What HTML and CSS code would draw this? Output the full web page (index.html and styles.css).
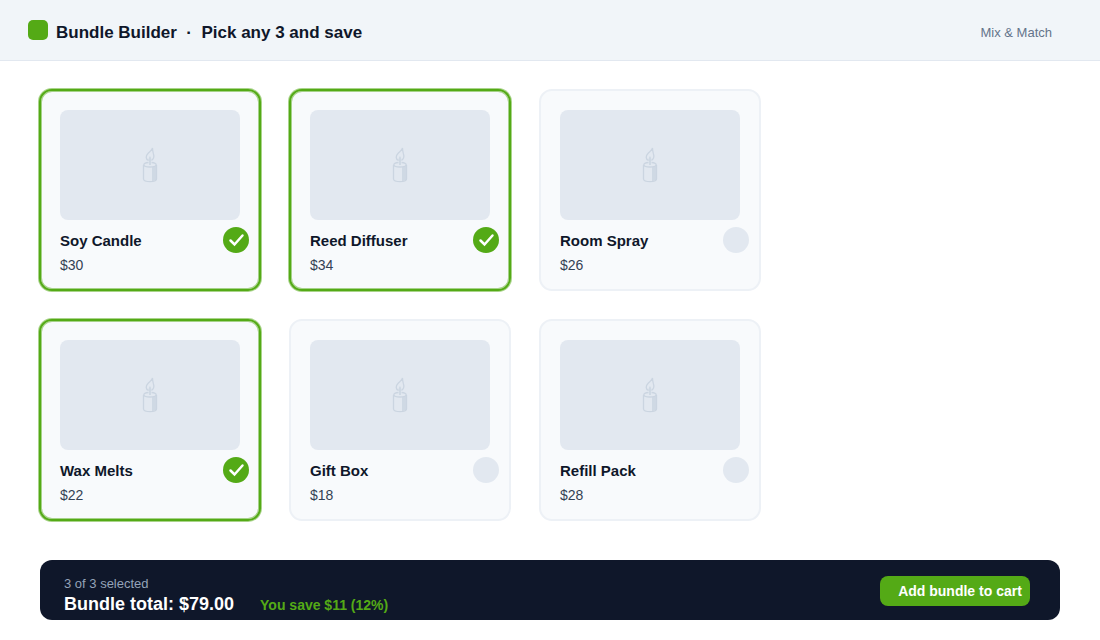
FILE: index.html
```html
<!DOCTYPE html>
<html lang="en">
<head>
    <meta charset="UTF-8">
    <meta name="viewport" content="width=device-width, initial-scale=1.0">
    <title>Bundle Builder</title>
    <link rel="stylesheet" href="styles.css">
</head>
<body>
    <svg class="sprite" aria-hidden="true">
        <symbol id="candle" viewBox="0 0 16 36">
            <path d="M6.500 13.500C3.500 12 3.500 9 6 6.500C8 4.500 10 3.500 10.500 1C10.500 4 11 5 11.500 7C12.500 10 11.500 12 9.500 13.500"/>
            <path class="shade" d="M8 9C6 12 6.500 14 7 14V18H9V14C9.500 13 9.500 11 8 9Z"/>
            <path d="M6.500 15.500C0 16 0 20 8 20C16 20 16 16 9.500 15.500"/>
            <path d="M1.500 18V32C2 35.500 14 35.500 14.500 32V18"/>
            <path class="shade" d="M10 20L15 18.500V32.500L10 34.500Z"/>
        </symbol>
        <symbol id="check" viewBox="0 0 26 26">
            <path d="M7.500 13.500L11.500 17.500L19.500 8.500"/>
        </symbol>
    </svg>
    <header class="topbar">
        <span class="logo"></span>
        <h1>Bundle Builder &nbsp;·&nbsp; Pick any 3 and save</h1>
        <span class="tag">Mix &amp; Match</span>
    </header>
    <main class="products">
        <label class="card">
            <span class="photo"><svg class="candle"><use href="#candle"/></svg></span>
            <span class="info">
                <span class="name">Soy Candle</span>
                <span class="price">$30</span>
            </span>
            <span class="pick"><input type="checkbox" checked><svg class="check"><use href="#check"/></svg></span>
        </label>
        <label class="card">
            <span class="photo"><svg class="candle"><use href="#candle"/></svg></span>
            <span class="info">
                <span class="name">Reed Diffuser</span>
                <span class="price">$34</span>
            </span>
            <span class="pick"><input type="checkbox" checked><svg class="check"><use href="#check"/></svg></span>
        </label>
        <label class="card">
            <span class="photo"><svg class="candle"><use href="#candle"/></svg></span>
            <span class="info">
                <span class="name">Room Spray</span>
                <span class="price">$26</span>
            </span>
            <span class="pick"><input type="checkbox"><svg class="check"><use href="#check"/></svg></span>
        </label>
        <label class="card">
            <span class="photo"><svg class="candle"><use href="#candle"/></svg></span>
            <span class="info">
                <span class="name">Wax Melts</span>
                <span class="price">$22</span>
            </span>
            <span class="pick"><input type="checkbox" checked><svg class="check"><use href="#check"/></svg></span>
        </label>
        <label class="card">
            <span class="photo"><svg class="candle"><use href="#candle"/></svg></span>
            <span class="info">
                <span class="name">Gift Box</span>
                <span class="price">$18</span>
            </span>
            <span class="pick"><input type="checkbox"><svg class="check"><use href="#check"/></svg></span>
        </label>
        <label class="card">
            <span class="photo"><svg class="candle"><use href="#candle"/></svg></span>
            <span class="info">
                <span class="name">Refill Pack</span>
                <span class="price">$28</span>
            </span>
            <span class="pick"><input type="checkbox"><svg class="check"><use href="#check"/></svg></span>
        </label>
    </main>
    <footer class="summary">
        <div class="totals">
            <span class="count">3 of 3 selected</span>
            <div class="total-row">
                <strong class="total">Bundle total: $79.00</strong>
                <span class="saving">You save $11 (12%)</span>
            </div>
        </div>
        <button type="button" class="add">Add bundle to cart</button>
    </footer>
</body>
</html>
```
FILE: styles.css
```css
* { box-sizing: border-box; }
body {
    margin: 0;
    font-family: "Liberation Sans", Arial, sans-serif;
    color: #0f172a;
    background: #ffffff;
}
.sprite { display: none; }

.topbar {
    display: flex;
    align-items: flex-start;
    gap: 8px;
    padding: 20px 48px 14px 28px;
    background: #f1f5f9;
    border-bottom: 1px solid #e2e8f0;
}
.logo { width: 20px; height: 20px; border-radius: 5px; background: #54aa16; }
.topbar h1 { margin: 0; font-size: 17px; line-height: 26px; }
.tag { margin-left: auto; font-size: 13px; line-height: 26px; color: #64748b; }

.products {
    display: grid;
    grid-template-columns: repeat(3, 222px);
    gap: 28px;
    padding: 28px 39px;
}
.card {
    display: grid;
    grid-template-columns: 1fr auto;
    align-content: start;
    row-gap: 7px;
    padding: 19px 10px 14px 19px;
    border: 2px solid #edf1f6;
    border-radius: 13px;
    background: #f8fafc;
    cursor: pointer;
}
.card:has(:checked) {
    border-color: #54aa16;
    box-shadow: 0 0 0 1px rgba(84, 170, 22, 0.5), inset 0 0 0 1px rgba(84, 170, 22, 0.5);
}
.photo {
    grid-column: 1 / -1;
    display: flex;
    align-items: center;
    justify-content: center;
    width: 180px;
    height: 110px;
    border-radius: 8px;
    background: #e2e8f0;
}
.candle { width: 16px; height: 36px; fill: none; stroke: #cbd5e1; stroke-width: 1.3; }
.shade { fill: #cbd5e1; stroke: none; opacity: 0.8; }
.info { display: flex; flex-direction: column; gap: 4px; padding-top: 4px; }
.name { font-size: 15px; line-height: 20px; font-weight: bold; }
.price { font-size: 14px; line-height: 20px; color: #334155; }
.pick { display: grid; width: 26px; height: 26px; }
.pick input, .check { grid-area: 1 / 1; width: 26px; height: 26px; margin: 0; }
.pick input { appearance: none; border-radius: 50%; background: #e2e8f0; }
.pick input:checked { background: #54aa16; }
.check { display: none; fill: none; stroke: #ffffff; stroke-width: 2.5; stroke-linecap: round; pointer-events: none; }
.pick input:checked + .check { display: block; }

.summary {
    display: flex;
    align-items: flex-start;
    justify-content: space-between;
    margin: 11px 40px 20px;
    padding: 16px 30px 4px 24px;
    border-radius: 12px;
    background: #0f172a;
}
.count { display: block; font-size: 13px; line-height: 16px; color: #94a3b8; }
.total-row { display: flex; align-items: baseline; gap: 26px; }
.total { font-size: 18px; line-height: 24px; color: #ffffff; }
.saving { font-size: 14px; font-weight: bold; color: #54aa16; }
.add {
    width: 150px;
    height: 30px;
    padding: 0 8px 0 18px;
    border: 0;
    border-radius: 8px;
    background: #54aa16;
    color: #ffffff;
    font: bold 14px "Liberation Sans", Arial, sans-serif;
    white-space: nowrap;
}
```
